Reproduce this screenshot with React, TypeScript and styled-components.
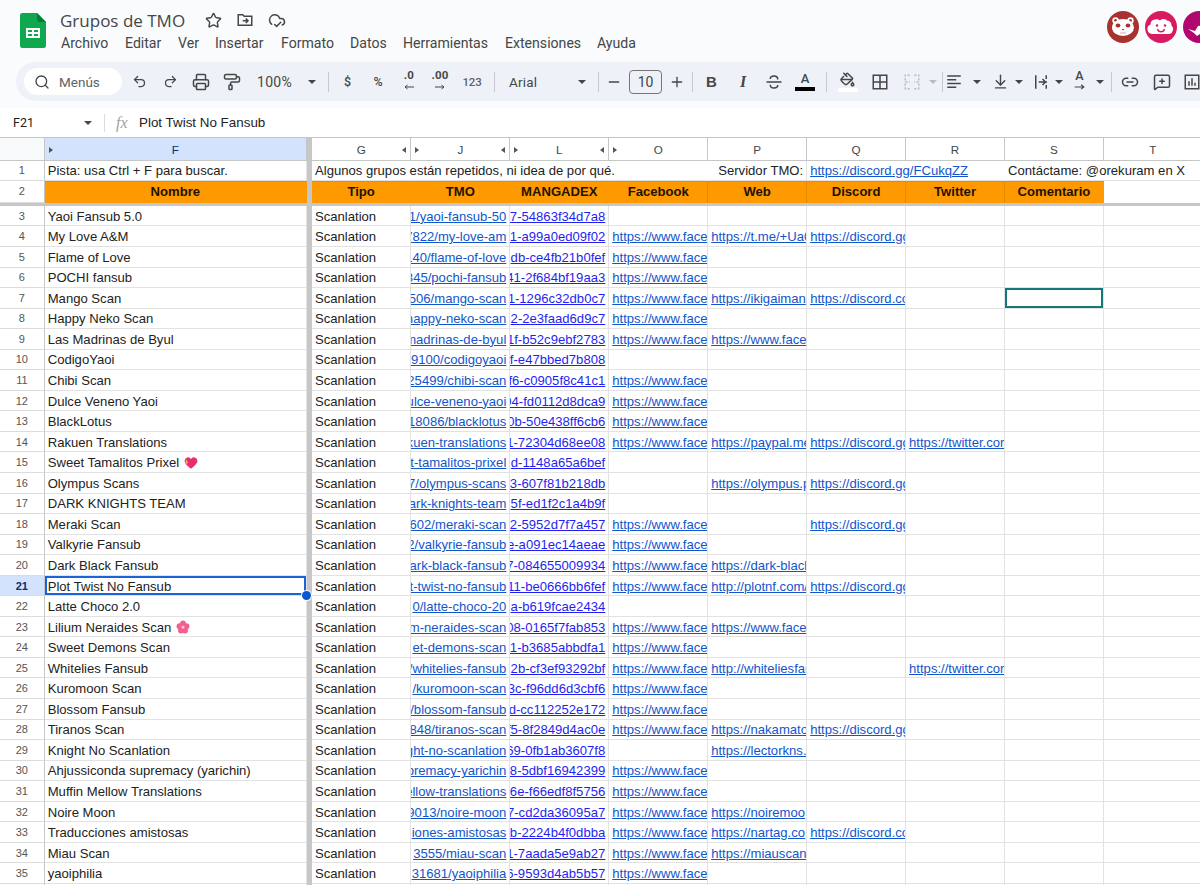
import React from "react";
import styled, { createGlobalStyle } from "styled-components";
import { ArrowDownToLine, CloudCheck, Link2, MessageSquarePlus, Minus, PaintBucket, PaintRoller, Plus, Printer, Redo2, Search, Star, Undo2 } from "lucide-react";

const Global = createGlobalStyle`
  html, body { margin: 0; padding: 0; background: #f9fbfd; }
  * { box-sizing: border-box; }
`;

const Page = styled.div`
  width: 1200px; height: 885px; overflow: hidden; background: #f9fbfd;
  display: flex; flex-direction: column; color: #444746;
  font-family: Roboto, "Liberation Sans", sans-serif;
`;
const TitleBar = styled.header`
  height: 62px; flex: none; display: flex; align-items: flex-start; padding-left: 20px;
`;
const LogoSvg = styled.svg`
  width: 26px; height: 35px; margin-top: 13px; flex: none;
`;
const TitleColumn = styled.div`
  margin-left: 14px; display: flex; flex-direction: column;
`;
const TitleRow = styled.div`
  display: flex; align-items: center; height: 26px; margin-top: 7px;
`;
const DocTitle = styled.div`
  color: #444746; width: 144.5px;
  font-family: "Open Sans", Roboto, sans-serif; font-size: 17px;
`;
const TitleIcons = styled.div`
  display: flex; align-items: center; gap: 14px; color: #444746;
`;
const MenuBar = styled.nav`
  display: flex; margin-top: 1px; margin-left: 1px; height: 18px; align-items: center;
`;
const MenuItem = styled.span<{ $w: number }>`
  width: ${(p) => p.$w}px; font-size: 14.1px; color: #444746; flex: none; white-space: nowrap;
`;
const Avatars = styled.div`
  margin-left: auto; display: flex; gap: 6px; margin-top: 11px; margin-right: -15px; flex: none;
`;
const AvatarSvg = styled.svg`
  width: 32px; height: 32px; flex: none;
`;

const ToolbarWrap = styled.div`
  height: 46px; flex: none; overflow: hidden; padding-left: 16px;
`;
const Toolbar = styled.div`
  width: 1240px; height: 39px; background: #eef2f8; border-radius: 20px;
  display: flex; align-items: center; padding-left: 8px;
`;
const MenuSearch = styled.div`
  width: 98px; height: 27px; background: #fff; border-radius: 14px; flex: none; margin-right: 1.5px;
  display: flex; align-items: center; padding-left: 10px; gap: 9px; font-size: 13.5px; color: #5f6368;
`;
const Btn = styled.div<{ $w: number; $m?: number }>`
  width: ${(p) => p.$w}px; margin-left: ${(p) => p.$m ?? 0}px; height: 100%; flex: none;
  display: flex; align-items: center; justify-content: center; color: #444746;
`;
const MutedBtn = styled(Btn)`
  color: #b9bcc0;
`;
const Sep = styled.div<{ $l: number; $r: number }>`
  width: 1px; height: 20px; background: #c7cbd1; flex: none;
  margin: 0 ${(p) => p.$r}px 0 ${(p) => p.$l}px;
`;
const DropBtn = styled.div<{ $w: number }>`
  width: ${(p) => p.$w}px; flex: none; height: 100%; display: flex; align-items: center;
  justify-content: space-between; padding: 0 8px 0 9.5px; font-size: 14px; color: #444746;
`;
const ZoomLabel = styled.span`
  font-size: 14px; letter-spacing: .3px;
`;
const FontLabel = styled.span`
  font-size: 13.5px; letter-spacing: .2px;
`;
const Caret = styled.i<{ $muted?: boolean }>`
  display: block; width: 0; height: 0; flex: none;
  border-left: 4px solid transparent; border-right: 4px solid transparent;
  border-top: 4px solid ${(p) => (p.$muted ? "#b9bcc0" : "#444746")};
`;
const SymbolText = styled.span`
  font-size: 12.5px; font-weight: 500; color: #444746; font-family: Roboto, sans-serif;
`;
const NumText = styled.span`
  font-size: 11.5px; font-weight: 500; color: #5f6368; letter-spacing: -.2px;
`;
const DecimalStack = styled.div`
  display: flex; flex-direction: column; align-items: center; line-height: 11px;
  font-size: 11.5px; font-weight: 700; color: #444746; letter-spacing: .2px;
`;
const SizeBox = styled.div`
  width: 33px; height: 24px; margin-left: 3.5px; flex: none; border: 1px solid #747775; border-radius: 4px;
  display: flex; align-items: center; justify-content: center; font-size: 14px; color: #444746;
`;
const BoldLetter = styled.span`
  font: 700 15px "Liberation Sans", sans-serif; color: #444746;
`;
const ItalicLetter = styled.span`
  font: italic 700 16px "Liberation Serif", serif; color: #444746;
`;
const ColorStack = styled.div`
  display: flex; flex-direction: column; align-items: center; gap: 1px;
`;
const ColorLetter = styled.span`
  font-size: 13px; line-height: 14px; font-weight: 500; color: #444746;
`;
const ColorBar = styled.div<{ $c: string }>`
  width: 20px; height: 4px; background: ${(p) => p.$c};
`;
const Ico = styled.svg<{ $s?: number }>`
  width: ${(p) => p.$s ?? 18}px; height: ${(p) => p.$s ?? 18}px; flex: none;
  fill: none; stroke: currentColor; stroke-width: 2;
`;
const RotStack = styled.div`
  display: flex; flex-direction: column; align-items: center; line-height: 11px; font-size: 12.5px; color: #444746; font-weight: 500;
`;

const FormulaBar = styled.div`
  height: 29px; flex: none; background: #fff; display: flex; align-items: center; font-size: 13px;
`;
const CellRef = styled.div`
  width: 92px; padding-left: 13px; padding-right: 0; display: flex; align-items: center; justify-content: space-between;
  font-size: 12.5px; color: #222; flex: none;
`;
const FormulaSep = styled.div`
  width: 1px; height: 18px; background: #dadce0; margin-left: 12px; flex: none;
`;
const Fx = styled.span`
  font: italic 16px "Liberation Serif", serif; color: #a0a4a8; margin-left: 11px; width: 23px; flex: none;
`;
const FormulaText = styled.span`
  font: 13.4px "Liberation Sans", sans-serif; color: #222;
`;

const tracks = "44.7px 262.3px 5px 99.4px repeat(7, 98.94px) 99px";
const Sheet = styled.div`
  flex: none; background: #fff; font: 13.1px "Liberation Sans", Arial, sans-serif; color: #222;
  border-top: 1px solid #c4c7c5; overflow: hidden; width: 1200px; flex: 1;
`;
const HeadRow = styled.div`
  display: grid; grid-template-columns: ${tracks}; height: 23px; background: #fff;
  border-bottom: 1px solid #c4c7c5;
`;
const Corner = styled.div`
  background: #f8f9fa; border-right: 1px solid #c4c7c5;
`;
const ColHead = styled.div<{ $sel?: boolean }>`
  position: relative; display: flex; align-items: center; justify-content: center;
  font-size: 11.7px; color: ${(p) => (p.$sel ? "#0b2f6b" : "#444746")};
  background: ${(p) => (p.$sel ? "#d3e3fd" : "#fff")}; border-right: 1px solid #c4c7c5;
`;
const Gutter = styled.div`
  background: #c7c7c7;
`;
const Tri = styled.i<{ $side: "l" | "r" }>`
  position: absolute; top: 9px; ${(p) => (p.$side === "l" ? "left: 4px" : "right: 4px")};
  width: 0; height: 0; border-top: 3.5px solid transparent; border-bottom: 3.5px solid transparent;
  ${(p) => (p.$side === "l" ? "border-left: 4px solid #555" : "border-right: 4px solid #555")};
`;
const Row = styled.div<{ $h: number }>`
  display: grid; grid-template-columns: ${tracks}; height: ${(p) => p.$h}px;
`;
const NoteRow = styled(Row)`
  & > div { padding-top: 0; padding-bottom: 1px; }
`;
const RowHead = styled.div<{ $sel?: boolean }>`
  display: flex; align-items: center; justify-content: center; font-size: 11px;
  color: ${(p) => (p.$sel ? "#0b2f6b" : "#555")}; font-weight: ${(p) => (p.$sel ? 700 : 400)};
  background: ${(p) => (p.$sel ? "#d3e3fd" : "#fff")};
  border-right: 1px solid #c4c7c5; border-bottom: 1px solid #dcdcdc;
`;
const Cell = styled.div<{ $span?: number; $sel?: "blue" | "teal" }>`
  position: relative; display: flex; align-items: center; padding: 1px 0 0 3px; white-space: nowrap;
  overflow: ${(p) => (p.$sel === "blue" ? "visible" : "hidden")}; min-width: 0;
  grid-column: ${(p) => (p.$span ? `span ${p.$span}` : "auto")};
  border-right: 1px solid #e2e2e2; border-bottom: 1px solid #e2e2e2;
  ${(p) => p.$sel === "blue" && "box-shadow: inset 0 0 0 2px #1a63d8; z-index: 2;"}
  ${(p) => p.$sel === "teal" && "box-shadow: inset 0 0 0 2px #13787a; z-index: 2;"}
`;
const RightCell = styled(Cell)`
  justify-content: flex-end; padding: 1px 3px 0 0;
`;
const NoteCell = styled(Cell)`
  border-right-color: transparent;
`;
const OrangeCell = styled.div<{ $edge?: boolean }>`
  display: flex; align-items: center; justify-content: center; background: #ff9900; font-weight: 700;
  color: #1d1300; border-top: 1px solid #e88c06; padding-bottom: 2px;
  border-right: 1px solid ${(p) => (p.$edge ? "#e58a05" : "#ff9900")};
`;
const BlankCell = styled.div`
  border-right: 1px solid #e2e2e2;
`;
const FreezeBar = styled.div`
  height: 3.4px; background: #c7c7c7;
`;
const A = styled.a<{ $vivid?: boolean }>`
  color: ${(p) => (p.$vivid ? "#1f1ff0" : "#1155cc")}; text-decoration: underline; flex: none;
`;
const Name = styled.span`
  display: inline-flex; align-items: center; gap: 5px;
`;
const Handle = styled.i`
  position: absolute; right: -5px; bottom: -5px; width: 9px; height: 9px; border-radius: 50%;
  background: #0b57d0; box-shadow: 0 0 0 1px #fff; z-index: 3;
`;
const Emoji = styled.svg`
  width: 14px; height: 14px; flex: none;
`;

const F = "https://www.face";
const D = "https://discord.gg";
const DC = "https://discord.co";
const T = "https://twitter.cor";
type R = [string, string, string, string?, string?, string?, string?];
const data: R[] = [
  ["Yaoi Fansub 5.0", "1/yaoi-fansub-50", "7-54863f34d7a8"],
  ["My Love A&M", "7822/my-love-am", "1-a99a0ed09f02", F, "https://t.me/+Ua0", D],
  ["Flame of Love", "140/flame-of-love", "db-ce4fb21b0fef", F],
  ["POCHI fansub", "345/pochi-fansub", "41-2f684bf19aa3", F],
  ["Mango Scan", "506/mango-scan", "1-1296c32db0c7", F, "https://ikigaiman", DC],
  ["Happy Neko Scan", "happy-neko-scan", "2-2e3faad6d9c7", F],
  ["Las Madrinas de Byul", "madrinas-de-byul", "1f-b52c9ebf2783", F, "https://www.face"],
  ["CodigoYaoi", "9100/codigoyaoi", "f-e47bbed7b808"],
  ["Chibi Scan", "25499/chibi-scan", "f6-c0905f8c41c1", F],
  ["Dulce Veneno Yaoi", "ulce-veneno-yaoi", "94-fd0112d8dca9", F],
  ["BlackLotus", "18086/blacklotus", "0b-50e438ff6cb6", F],
  ["Rakuen Translations", "kuen-translations", "1-72304d68ee08", F, "https://paypal.me", D, T],
  ["Sweet Tamalitos Prixel", "t-tamalitos-prixel", "d-1148a65a6bef"],
  ["Olympus Scans", "7/olympus-scans", "3-607f81b218db", "", "https://olympus.p", D],
  ["DARK KNIGHTS TEAM", "ark-knights-team", "5f-ed1f2c1a4b9f"],
  ["Meraki Scan", "602/meraki-scan", "2-5952d7f7a457", F, "", D],
  ["Valkyrie Fansub", "2/valkyrie-fansub", "e-a091ec14aeae", F],
  ["Dark Black Fansub", "ark-black-fansub", "7-084655009934", F, "https://dark-black"],
  ["Plot Twist No Fansub", "t-twist-no-fansub", "11-be0666bb6fef", F, "http://plotnf.com/", D],
  ["Latte Choco 2.0", "0/latte-choco-20", "a-b619fcae2434"],
  ["Lilium Neraides Scan", "m-neraides-scan", "08-0165f7fab853", F, "https://www.face"],
  ["Sweet Demons Scan", "et-demons-scan", "1-b3685abbdfa1", F],
  ["Whitelies Fansub", "/whitelies-fansub", "2b-cf3ef93292bf", F, "http://whiteliesfan", "", T],
  ["Kuromoon Scan", "/kuromoon-scan", "3c-f96dd6d3cbf6", F],
  ["Blossom Fansub", "/blossom-fansub", "d-cc112252e172", F],
  ["Tiranos Scan", "848/tiranos-scan", "f5-8f2849d4ac0e", F, "https://nakamato", D],
  ["Knight No Scanlation", "ght-no-scanlation", "69-0fb1ab3607f8", "", "https://lectorkns."],
  ["Ahjussiconda supremacy (yarichin)", "premacy-yarichin", "8-5dbf16942399", F],
  ["Muffin Mellow Translations", "ellow-translations", "6e-f66edf8f5756", F],
  ["Noire Moon", "9013/noire-moon", "7-cd2da36095a7", F, "https://noiremoo"],
  ["Traducciones amistosas", "iones-amistosas", "b-2224b4f0dbba", F, "https://nartag.co", DC],
  ["Miau Scan", "3555/miau-scan", "1-7aada5e9ab27", F, "https://miauscan"],
  ["yaoiphilia", "31681/yaoiphilia", "6-9593d4ab5b57", F],
];

const menu: [string, number][] = [["Archivo", 64], ["Editar", 53], ["Ver", 37], ["Insertar", 66], ["Formato", 69], ["Datos", 53], ["Herramientas", 102], ["Extensiones", 92], ["Ayuda", 50]];

const Logo = () => (
  <LogoSvg viewBox="0 0 26 35">
    <path d="M2.5 0H17l9 9v23.5a2.5 2.5 0 0 1-2.5 2.5h-21A2.5 2.5 0 0 1 0 32.5v-30A2.5 2.5 0 0 1 2.5 0z" fill="#0fa84f" />
    <path d="M17 0l9 9h-6.5A2.5 2.5 0 0 1 17 6.5z" fill="#0a7a3a" />
    <path d="M6 15h14v10H6z M8 17v2h4v-2z M14 17v2h4v-2z M8 21v2h4v-2z M14 21v2h4v-2z" fill="#fff" fillRule="evenodd" />
  </LogoSvg>
);
const Panda = () => (
  <AvatarSvg viewBox="0 0 32 32">
    <circle cx="16" cy="16" r="16" fill="#a8322f" />
    <circle cx="8.5" cy="9.5" r="3.2" fill="#fff" />
    <circle cx="23.5" cy="9.5" r="3.2" fill="#fff" />
    <circle cx="8.5" cy="9.5" r="1.4" fill="#a8322f" />
    <circle cx="23.5" cy="9.5" r="1.4" fill="#a8322f" />
    <ellipse cx="16" cy="16.5" rx="11" ry="8.5" fill="#fff" />
    <ellipse cx="11" cy="14.5" rx="2.4" ry="2" fill="#a8322f" />
    <ellipse cx="21" cy="14.5" rx="2.4" ry="2" fill="#a8322f" />
    <path d="M14.5 18h3L16 19.5z" fill="#a8322f" />
    <path d="M13 22h6" stroke="#e6b5b3" strokeWidth="1.2" />
  </AvatarSvg>
);
const Bun = () => (
  <AvatarSvg viewBox="0 0 32 32">
    <circle cx="16" cy="16" r="16" fill="#d81b60" />
    <path d="M7 23a5 5 0 0 1-1.5-9.6A5 5 0 0 1 10 8.5a5 5 0 0 1 5 1 5 5 0 0 1 7 0 5 5 0 0 1 4.5 5 5 5 0 0 1-2 8.5z" fill="#fff" />
    <circle cx="12" cy="14.5" r="1.2" fill="#d81b60" />
    <circle cx="20" cy="14.5" r="1.2" fill="#d81b60" />
    <path d="M12.5 18a3.6 3.6 0 0 0 7 0" fill="none" stroke="#d81b60" strokeWidth="1.3" />
  </AvatarSvg>
);
const Goose = () => (
  <AvatarSvg viewBox="0 0 32 32">
    <circle cx="16" cy="16" r="16" fill="#b0076f" />
    <path d="M5 18l7 2 3-5 17-3v11H17l-3 2-3-3z" fill="#fff" />
  </AvatarSvg>
);

const Heart = () => (
  <Emoji viewBox="0 0 24 24">
    <path d="M12 22C6 17 1 13 1 8a6 6 0 0 1 11-3 6 6 0 0 1 11 3c0 5-5 9-11 14z" fill="#e5306f" />
    <path d="M3 5l4 6-4 3z" fill="#f8b26a" />
  </Emoji>
);
const Blossom = () => (
  <Emoji viewBox="0 0 24 24">
    <g fill="#f2608e">
      <circle cx="12" cy="6" r="5" /><circle cx="18" cy="10.5" r="5" /><circle cx="15.5" cy="18" r="5" /><circle cx="8.5" cy="18" r="5" /><circle cx="6" cy="10.5" r="5" />
    </g>
    <circle cx="12" cy="12.5" r="2.5" fill="#fbc7d8" />
  </Emoji>
);

const Link = ({ v, vivid }: { v?: string; vivid?: boolean }) => (v ? <A $vivid={vivid}>{v}</A> : null);

const App: React.FC = () => (
  <Page>
    <Global />
    <TitleBar>
      <Logo />
      <TitleColumn>
        <TitleRow>
          <DocTitle>Grupos de TMO</DocTitle>
          <TitleIcons>
            <Star size={17} strokeWidth={2} />
            <Ico $s={18} viewBox="0 0 24 24"><path d="M3 19V5h6l2 2h10v12z M9 13h7 M13 10l3 3-3 3" /></Ico>
            <CloudCheck size={18} strokeWidth={2} />
          </TitleIcons>
        </TitleRow>
        <MenuBar>
          {menu.map(([m, w]) => <MenuItem key={m} $w={w}>{m}</MenuItem>)}
        </MenuBar>
      </TitleColumn>
      <Avatars><Panda /><Bun /><Goose /></Avatars>
    </TitleBar>

    <ToolbarWrap>
      <Toolbar>
        <MenuSearch><Search size={16} strokeWidth={2} color="#444746" />Menús</MenuSearch>
        <Btn $w={31}><Undo2 size={15} strokeWidth={2} /></Btn>
        <Btn $w={31}><Redo2 size={15} strokeWidth={2} /></Btn>
        <Btn $w={31}><Printer size={18} strokeWidth={2} /></Btn>
        <Btn $w={31}><PaintRoller size={18} strokeWidth={2} /></Btn>
        <DropBtn $w={76}><ZoomLabel>100%</ZoomLabel><Caret /></DropBtn>
        <Sep $l={4} $r={4} />
        <Btn $w={30}><SymbolText>$</SymbolText></Btn>
        <Btn $w={31}><SymbolText>%</SymbolText></Btn>
        <Btn $w={31}><DecimalStack>.0<Ico $s={12} viewBox="0 0 24 10"><path d="M22 5H4 M9 1L4 5l5 4" /></Ico></DecimalStack></Btn>
        <Btn $w={31}><DecimalStack>.00<Ico $s={12} viewBox="0 0 24 10"><path d="M2 5h18 M15 1l5 4-5 4" /></Ico></DecimalStack></Btn>
        <Btn $w={33}><NumText>123</NumText></Btn>
        <Sep $l={5} $r={5} />
        <DropBtn $w={94}><FontLabel>Arial</FontLabel><Caret /></DropBtn>
        <Sep $l={4} $r={4} />
        <Btn $w={23}><Minus size={16} strokeWidth={2} /></Btn>
        <SizeBox>10</SizeBox>
        <Btn $w={26} $m={2}><Plus size={16} strokeWidth={2} /></Btn>
        <Sep $l={1.5} $r={3} />
        <Btn $w={32}><BoldLetter>B</BoldLetter></Btn>
        <Btn $w={31}><ItalicLetter>I</ItalicLetter></Btn>
        <Btn $w={31}><Ico viewBox="0 0 24 24"><path d="M2 12h20 M17 8.5C17 5.5 14.8 4 12 4S7 5.5 7 8 M7 15.5C7 18.5 9.2 20 12 20s5-1.5 5-4" /></Ico></Btn>
        <Btn $w={31}><ColorStack><ColorLetter>A</ColorLetter><ColorBar $c="#000" /></ColorStack></Btn>
        <Sep $l={5.5} $r={4.5} />
        <Btn $w={32}><ColorStack><PaintBucket size={15} strokeWidth={2.4} /><ColorBar $c="#fff" /></ColorStack></Btn>
        <Btn $w={32}><Ico viewBox="0 0 24 24"><path d="M3 3h18v18H3z M12 3v18 M3 12h18" /></Ico></Btn>
        <MutedBtn $w={32}><Ico viewBox="0 0 24 24" strokeDasharray="3 2"><path d="M3 10V3h6 M15 3h6v7 M21 14v7h-6 M9 21H3v-7 M3 12h6 M21 12h-6" /></Ico></MutedBtn>
        <Btn $w={11}><Caret $muted /></Btn>
        <Sep $l={3.5} $r={0} />
        <Btn $w={22}><Ico viewBox="0 0 24 24"><path d="M3 4h18 M3 9h12 M3 14h18 M3 19h12" /></Ico></Btn>
        <Btn $w={24}><Caret /></Btn>
        <Btn $w={23}><ArrowDownToLine size={17} strokeWidth={2} /></Btn>
        <Btn $w={14}><Caret /></Btn>
        <Btn $w={29}><Ico viewBox="0 0 24 24"><path d="M5 3v18 M19 3v5 M19 11v2 M19 16v5 M9 12h9 M14 8l4 4-4 4" /></Ico></Btn>
        <Btn $w={8}><Caret /></Btn>
        <Btn $w={33}><RotStack>A<Ico $s={13} viewBox="0 0 24 10"><path d="M3 4h17 M15 0l5 4-5 4" /></Ico></RotStack></Btn>
        <Btn $w={7}><Caret /></Btn>
        <Sep $l={8} $r={1} />
        <Btn $w={33}><Link2 size={18} strokeWidth={2} /></Btn>
        <Btn $w={31}><MessageSquarePlus size={18} strokeWidth={2} /></Btn>
        <Btn $w={30}><Ico viewBox="0 0 24 24"><path d="M3 3h18v18H3z M8 17v-6 M12 17V7 M16 17v-4" /></Ico></Btn>
      </Toolbar>
    </ToolbarWrap>

    <FormulaBar>
      <CellRef>F21<Caret /></CellRef>
      <FormulaSep />
      <Fx>fx</Fx>
      <FormulaText>Plot Twist No Fansub</FormulaText>
    </FormulaBar>

    <Sheet>
      <HeadRow>
        <Corner />
        <ColHead $sel><Tri $side="l" />F</ColHead>
        <Gutter />
        <ColHead>G<Tri $side="r" /></ColHead>
        <ColHead><Tri $side="l" />J<Tri $side="r" /></ColHead>
        <ColHead><Tri $side="l" />L<Tri $side="r" /></ColHead>
        <ColHead><Tri $side="l" />O</ColHead>
        <ColHead>P</ColHead>
        <ColHead>Q</ColHead>
        <ColHead>R</ColHead>
        <ColHead>S</ColHead>
        <ColHead>T</ColHead>
      </HeadRow>
      <NoteRow $h={20}>
        <RowHead>1</RowHead>
        <Cell>Pista: usa Ctrl + F para buscar.</Cell>
        <Gutter />
        <NoteCell $span={4}>Algunos grupos están repetidos, ni idea de por qué.</NoteCell>
        <RightCell>Servidor TMO:</RightCell>
        <NoteCell $span={2}><A>https://discord.gg/FCukqZZ</A></NoteCell>
        <NoteCell $span={2}>Contáctame: @orekuram en X</NoteCell>
      </NoteRow>
      <Row $h={21.5}>
        <RowHead>2</RowHead>
        <OrangeCell>Nombre</OrangeCell>
        <Gutter />
        <OrangeCell>Tipo</OrangeCell>
        <OrangeCell>TMO</OrangeCell>
        <OrangeCell>MANGADEX</OrangeCell>
        <OrangeCell $edge>Facebook</OrangeCell>
        <OrangeCell $edge>Web</OrangeCell>
        <OrangeCell $edge>Discord</OrangeCell>
        <OrangeCell $edge>Twitter</OrangeCell>
        <OrangeCell>Comentario</OrangeCell>
        <BlankCell />
      </Row>
      <FreezeBar />
      {data.map((r, i) => {
        const n = i + 3;
        return (
          <Row key={n} $h={20.56}>
            <RowHead $sel={n === 21}>{n}</RowHead>
            <Cell $sel={n === 21 ? "blue" : undefined}>
              <Name>
                {r[0]}
                {n === 15 && <Heart />}
                {n === 23 && <Blossom />}
              </Name>
              {n === 21 && <Handle />}
            </Cell>
            <Gutter />
            <Cell>Scanlation</Cell>
            <RightCell><Link v={r[1]} /></RightCell>
            <RightCell><Link v={r[2]} vivid /></RightCell>
            <Cell><Link v={r[3]} /></Cell>
            <Cell><Link v={r[4]} /></Cell>
            <Cell><Link v={r[5]} /></Cell>
            <Cell><Link v={r[6]} /></Cell>
            <Cell $sel={n === 7 ? "teal" : undefined} />
            <Cell />
          </Row>
        );
      })}
      <Row $h={20.56}>
        <RowHead />
        <Cell />
        <Gutter />
        <Cell /><Cell /><Cell /><Cell /><Cell /><Cell /><Cell /><Cell /><Cell />
      </Row>
    </Sheet>
  </Page>
);

export default App;
